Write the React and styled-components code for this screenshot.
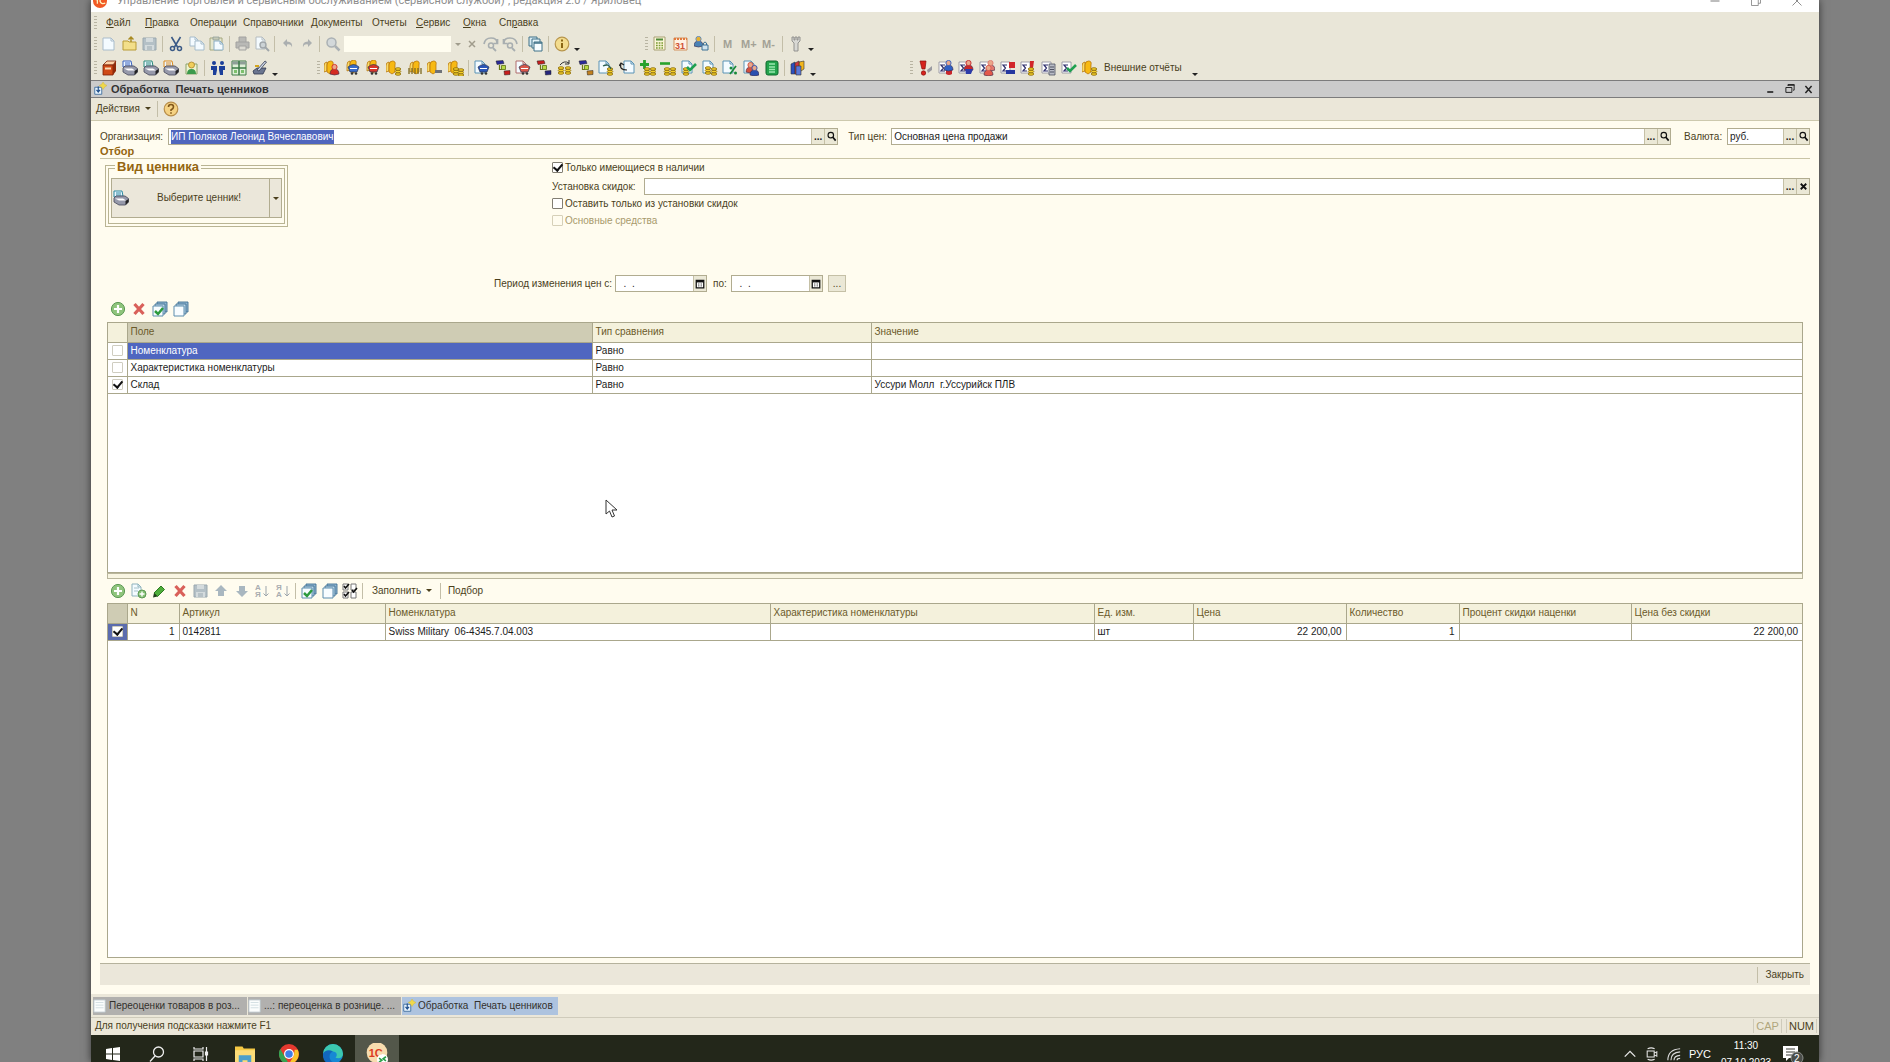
import React, { useEffect, useRef } from "react"
import styled, { createGlobalStyle, css } from "styled-components"

/* ---------- icon pieces ---------- */

const Page = ({ x = 1, y = 1, w = 10, h = 12, line = "#5b93b5" }) => (
	<g>
		<path d={`M${x} ${y}h${w - 3}l3 3v${h - 3}h-${w}z`} fill="#f4fbff" stroke={line} />
		<path d={`M${x + w - 3} ${y}v3h3`} fill="none" stroke={line} />
	</g>
)

const Coins = ({ x = 9, y = 7 }) => (
	<g fill="#f3cf2a" stroke="#8a6a08" strokeWidth="0.8">
		<ellipse cx={x + 3} cy={y + 7} rx="2.800" ry="1.300" />
		<ellipse cx={x + 3} cy={y + 4.5} rx="2.800" ry="1.300" />
		<ellipse cx={x + 3} cy={y + 2} rx="2.800" ry="1.300" />
	</g>
)

const Person = ({ x = 5, y = 4, c = "#2b56b8" }) => (
	<g>
		<path d={`M${x} ${y + 10}q0-5 4.500-5t4.500 5q-4.500 2-9 0z`} fill={c} stroke="#3a2a4a" strokeWidth="0.6" />
		<circle cx={x + 4.5} cy={y + 3} r="2.600" fill="#e9a88a" stroke={c} strokeWidth="0.9" />
	</g>
)

const Folder = ({ x = 0, y = 1 }) => (
	<g>
		<path d={`M${x} ${y + 11}v-6q0-4 3-4v9z`} fill="#fbdc6a" stroke="#b06d06" strokeWidth="0.7" />
		<path d={`M${x + 3} ${y + 11}v-7q0-4 3.500-4t2.500 4v7l-3 2z`} fill="#f7b913" stroke="#b06d06" strokeWidth="0.7" />
	</g>
)

const Cart = ({ x = 4, y = 6, c = "#2b56b8" }) => (
	<g>
		<path d={`M${x} ${y + 1}q5.500-5 11 0l-2 5h-7z`} fill={c} stroke="#26314d" strokeWidth="0.7" />
		<path d={`M${x + 2} ${y + 2.5}h7`} stroke="#fff" strokeWidth="1" />
		<circle cx={x + 4} cy={y + 7.5} r="1.300" fill="#333" />
		<circle cx={x + 8} cy={y + 7.5} r="1.300" fill="#333" />
	</g>
)

const Printer = ({ c = "#3d6fa8" }) => (
	<g>
		<path d="M1 7V1h8l1 5z" fill="#eaf5ff" stroke={c} />
		<path d="M3 3h5M3 5h5" stroke={c} />
		<path d="M1 8l2-2h9l3.500 2.500V12l-3 3H6l-5-3z" fill="#9699aa" stroke="#45485a" strokeWidth="0.8" />
		<path d="M2 8.500h8l3 2H6z" fill="#fff" />
		<path d="M12.500 11l3-2v3l-3 3z" fill="#222" />
	</g>
)

const Sigma = () => (
	<g>
		<path d="M1 2h9v11H1z" fill="#fff" stroke="#8b8b9b" strokeWidth="0.8" />
		<path d="M7 5H3l2.500 3L3 11h4" fill="none" stroke="#2d2d6b" strokeWidth="1.200" />
	</g>
)

const Check = ({ x = 6, y = 6 }) => (
	<path d={`M${x} ${y + 3}l3 3 6-6`} fill="none" stroke="#1fa050" strokeWidth="2.600" />
)

const Stairs = ({ a = "#2b2a9b", b = "#c81e1e" }) => (
	<g>
		<path d="M1 1l7-.500 1 3-7 1z" fill={a} stroke="#222" strokeWidth="0.5" />
		<path d="M4.500 5v4.500H7" fill="none" stroke="#6b7a14" strokeWidth="1.200" />
		<path d="M6.500 5.500h4v4h-4z" fill="#b7d943" stroke="#5b7012" strokeWidth="0.8" />
		<path d="M9 11l6-.500v4L9.500 15z" fill={b} stroke="#222" strokeWidth="0.5" />
	</g>
)

const Magnifier = ({ c = "#9b9b9b", fill = "#d3d8da" }) => (
	<g>
		<circle cx="6.500" cy="6.500" r="4.500" fill={fill} stroke={c} strokeWidth="1.500" />
		<path d="M10 10l4.500 4.500" stroke={c} strokeWidth="2.500" />
	</g>
)

const Stack = ({ checked }) => (
	<g>
		<path d="M5 1h10v10H5z" fill="#8fb4cf" stroke="#3f6f93" strokeWidth="0.9" />
		<path d="M3 3h10v10H3z" fill="#b9d4e6" stroke="#3f6f93" strokeWidth="0.9" />
		<path d="M1 5h10v10H1z" fill="#f7fcff" stroke="#5d8dad" />
		{checked && <path d="M3 10l3 3 5-6" fill="none" stroke="#2c9a3c" strokeWidth="2.500" />}
	</g>
)

const Letter = ({ children, x = 1, y = 12, size = 11, c = "#a3a196" }) => (
	<text x={x} y={y} fontFamily="Liberation Sans, sans-serif" fontWeight="bold" fontSize={size} fill={c}>
		{children}
	</text>
)

const SortIcon = ({ top, bottom }) => (
	<g>
		<Letter x={1} y={7} size={8} c="#a9adb0">{top}</Letter>
		<Letter x={1} y={14} size={8} c="#a9adb0">{bottom}</Letter>
		<path d="M12 3v10M9.500 10.500L12 13l2.500-2.500" fill="none" stroke="#9ca5ab" />
	</g>
)

const icons = {
	newDoc: <Page x={2} y={2} w={11} h={12} line="#a9bccb" />,
	open: (
		<g>
			<path d="M1 14V5h5l1 1h7v8z" fill="#f3df8a" stroke="#b99b37" />
			<path d="M9 6V1M6.500 3.500L9 1l2.500 2.500" fill="none" stroke="#a88a20" strokeWidth="1.400" />
		</g>
	),
	save: (
		<g>
			<path d="M1 2h13v12H1z" fill="#b4c0c6" stroke="#9aa8af" />
			<path d="M4 2h7v4H4zM3 9h9v5H3z" fill="#d4dbdd" />
			<path d="M5 11h5M5 13h5" stroke="#9aa8af" />
		</g>
	),
	cut: (
		<g fill="none" stroke="#3b5a86">
			<path d="M3.500 1l6 10M12.500 1l-6 10" strokeWidth="1.600" />
			<circle cx="4.500" cy="12.500" r="2" strokeWidth="1.500" />
			<circle cx="11.500" cy="12.500" r="2" strokeWidth="1.500" />
		</g>
	),
	copy: (
		<g>
			<Page x={1} y={1} w={8} h={9} line="#a6bccb" />
			<Page x={6} y={5} w={9} h={9} line="#a6bccb" />
		</g>
	),
	paste: (
		<g>
			<path d="M1 2h12v12H1z" fill="#e5e6cf" stroke="#a4a77f" />
			<path d="M4 1h6v3H4z" fill="#c5c9b6" stroke="#8a9a9a" strokeWidth="0.7" />
			<Page x={5} y={5} w={9} h={9} line="#8caec4" />
		</g>
	),
	printGray: (
		<g fill="#b9b9b6" stroke="#a2a2a0">
			<path d="M4 6V1h7v5" />
			<path d="M1 6h13v6H1z" />
			<path d="M4 10h7v4H4z" fill="#dcdad2" />
		</g>
	),
	preview: (
		<g>
			<Page x={2} y={1} w={9} h={12} line="#b4bcc0" />
			<circle cx="9" cy="9" r="3" fill="#ccd3d6" stroke="#a0a6aa" strokeWidth="1.400" />
			<path d="M11 11l4 4" stroke="#a0a6aa" strokeWidth="2" />
		</g>
	),
	undo: <path d="M7 3L3 7l4 4V8.500q4-1 5 3 1-6-5-6z" fill="#abafb0" />,
	redo: <path d="M9 3l4 4-4 4V8.500q-4-1-5 3-1-6 5-6z" fill="#abafb0" />,
	find: <Magnifier c="#aab0b4" />,
	findNext: (
		<g fill="none" stroke="#a8aeb0">
			<path d="M1 8q1-6 7-6t6 5M14.500 3v4.500h-4" strokeWidth="1.700" />
			<circle cx="8" cy="9.500" r="2.500" strokeWidth="1.500" />
			<path d="M10 12l3 3" strokeWidth="1.800" />
		</g>
	),
	findPrev: (
		<g fill="none" stroke="#a8aeb0">
			<path d="M15 8q-1-6-7-6T2 7M1.500 3v4.500h4" strokeWidth="1.700" />
			<circle cx="8" cy="9.500" r="2.500" strokeWidth="1.500" />
			<path d="M10 12l3 3" strokeWidth="1.800" />
		</g>
	),
	windows: (
		<g stroke="#3f7187">
			<path d="M1 1h8v9H1z" fill="#d8ebf3" />
			<path d="M4 3h8v9H4z" fill="#e5f3f8" />
			<path d="M6 6h8v9H6z" fill="#f8fdff" />
			<path d="M6 7h8" strokeWidth="1.500" />
		</g>
	),
	info: (
		<g>
			<circle cx="8" cy="8" r="6.800" fill="#f3dc8e" stroke="#b8964c" strokeWidth="1.200" />
			<path d="M8 7v5M8 3.500v2" stroke="#8a6514" strokeWidth="2" />
		</g>
	),
	help: (
		<g>
			<circle cx="8" cy="8" r="6.800" fill="#f5d283" stroke="#b88e4a" strokeWidth="1.200" />
			<path d="M5.500 6q0-2.500 2.500-2.500T10.500 6q0 1.500-2.500 3v1M8 11.200v1.500" fill="none" stroke="#80571b" strokeWidth="1.600" />
		</g>
	),
	calc: (
		<g>
			<path d="M2 1h11v13H2z" fill="#fbf6d8" stroke="#a8a074" />
			<path d="M4 3.500h7" stroke="#4f8a37" strokeWidth="2" />
			<path d="M4 7h7M4 9.500h7M4 12h7" stroke="#7b9a32" strokeWidth="1.500" strokeDasharray="1.700 1" />
		</g>
	),
	calendar: (
		<g>
			<path d="M1 2h13v12H1z" fill="#fff1e4" stroke="#d3915e" />
			<path d="M1 3h13" stroke="#e17a3c" strokeWidth="2" strokeDasharray="2 1" />
			<Letter x={2} y={13} size={9} c="#cf5234">31</Letter>
		</g>
	),
	userLock: (
		<g>
			<Person x={0} y={0} c="#4a82b5" />
			<path d="M8 9h6v5H8z" fill="#cfe3ee" stroke="#3c7195" />
			<path d="M9.500 9V7q1.500-2 3 0v2" fill="none" stroke="#3c7195" />
			<circle cx="4.500" cy="3" r="2" fill="#e5b32c" />
		</g>
	),
	m: <Letter x={3}>M</Letter>,
	mPlus: <Letter x={0}>M+</Letter>,
	mMinus: <Letter x={0}>M-</Letter>,
	wrench: <path d="M4 1v4l2 2v8h4V7l2-2V1h-2v3H9V1H7v3H6V1z" fill="#d8d8d4" stroke="#8a8a88" strokeWidth="0.9" />,
	book: (
		<g>
			<path d="M2 5l4-4h9l-3 4z" fill="#ffd2a8" stroke="#7a1f08" strokeWidth="0.8" />
			<path d="M2 5h10v10H2z" fill="#cf4a17" stroke="#7a1f08" strokeWidth="0.8" />
			<path d="M12 5l3-4v10l-3 4z" fill="#8f2a0a" />
			<path d="M4 7.500h6v2H4z" fill="#fbd9b5" />
		</g>
	),
	printBlue: <Printer c="#3b62c0" />,
	printGreen: <Printer c="#2a8a7a" />,
	printOrange: <Printer c="#db8a1c" />,
	printTeal: <Printer c="#2b8aa0" />,
	picture: (
		<g>
			<path d="M2 4h11v10H2z" fill="#eef3d0" stroke="#8ba36a" />
			<path d="M3 14q0-5 4.500-5t4.500 5z" fill="#3b9a4b" />
			<circle cx="7.500" cy="5" r="3" fill="#f1cf5b" stroke="#a8832a" strokeWidth="0.8" />
		</g>
	),
	people: (
		<g fill="#1c3f9a">
			<circle cx="4" cy="3" r="2" />
			<circle cx="12" cy="3" r="2" />
			<path d="M1 6h6v4l-1 5H3V10H1zM9 6h6v4h-2v5h-3l-1-5z" />
		</g>
	),
	grid: (
		<g>
			<path d="M1 1h14v14H1z" fill="#dff0d7" stroke="#3c7b45" />
			<path d="M1 3h14" stroke="#8f9f97" strokeWidth="3" />
			<path d="M8 1v14M1 8h14" stroke="#3c7b45" strokeWidth="1.500" />
			<path d="M3 10h3v3H3zM10 10h3v3h-3z" fill="#7cc06c" />
		</g>
	),
	sign: (
		<g>
			<path d="M1 11l4-3h9l-3 6H2z" fill="#6b7690" stroke="#30384e" strokeWidth="0.8" />
			<path d="M5 10l8-9 1.500 1L7 11z" fill="#cfd8ea" stroke="#30384e" strokeWidth="0.8" />
			<path d="M3 6h4" stroke="#d3a51c" strokeWidth="2" />
		</g>
	),
	bagRed: <g><Folder /><Person x={6} y={4} c="#d42b22" /></g>,
	bagBlue: <g><Folder x={2} y={0} /><Cart x={3} y={6} c="#3a6cc8" /></g>,
	bagCart: <g><Folder x={2} y={0} /><Cart x={3} y={6} c="#d8362a" /></g>,
	bagCoins: <g><Folder /><Coins /></g>,
	bagBars: <g><Folder x={3} /><path d="M2 8v6M5 8v6M8 8v6M11 8v6M14 8v6" stroke="#7d6a20" strokeWidth="1.300" /></g>,
	bagKey: <g><Folder /><path d="M8 10h7v3H8z" fill="#6f7278" /></g>,
	bagCoin: <g><Folder /><Coins x={5} y={7} /><Coins x={10} y={8} /></g>,
	docCart: <g><Page /><Cart /></g>,
	stairsRed: <Stairs />,
	docCartRed: <g><Page line="#b06d6d" /><Cart c="#d8564a" /></g>,
	stairsBlue: <Stairs a="#c81e1e" b="#26267d" />,
	coinsTurn: <g><Coins x={1} y={6} /><Coins x={8} y={6} /><path d="M3 5q4-5 9-2M12 0v4H8" fill="none" stroke="#333" /></g>,
	stairsOrange: <Stairs b="#c2801d" />,
	docArrow: <g><Page /><Coins /><path d="M5 6q6-3 8 3" fill="none" stroke="#2a5d50" strokeWidth="1.300" /></g>,
	docBack: <g><Page x={5} /><path d="M8 10Q0 10 2 4M0 6l2-3 3 2" fill="none" stroke="#222" strokeWidth="1.200" /></g>,
	plusCoins: <g><path d="M4.500 0v9M0 4.500h9" stroke="#28a22b" strokeWidth="2.800" /><Coins x={4} /><Coins x={10} /></g>,
	minusCoins: <g><path d="M0 3.500h10" stroke="#28a22b" strokeWidth="2.600" /><Coins x={4} /><Coins x={10} /></g>,
	docCheck: <g><Page /><Coins x={2} y={7} /><Check x={6} y={4} /></g>,
	docCoins: <g><Page /><Coins x={3} y={6} /><Coins x={9} /></g>,
	docPercent: <g><Page /><path d="M14 6l-6 8" stroke="#188a3a" strokeWidth="1.700" /><circle cx="9" cy="8" r="1.500" fill="#188a3a" /><circle cx="13.500" cy="13" r="1.500" fill="#188a3a" /></g>,
	docPeople: <g><Page /><Person x={3} y={2} c="#d4503f" /><Person x={7} y={5} c="#2a4fae" /></g>,
	greenCalc: (
		<g>
			<rect x="2" y="1" width="12" height="14" rx="2" fill="#23a34c" stroke="#0e6b2d" />
			<path d="M5 4h6M5 7h6M5 9.500h6M5 12h6" stroke="#9be7ae" strokeWidth="1.300" />
		</g>
	),
	books: (
		<g strokeWidth="0.6" stroke="#333">
			<path d="M9 2l5-1v8l-3 2H9z" fill="#f2b61c" />
			<path d="M1 4l4-2v12H1z" fill="#2b4fc0" />
			<path d="M5 3l4-2v13H5z" fill="#d2353c" />
			<path d="M6 6h5v9H6z" fill="#5b78d8" />
		</g>
	),
	alert: (
		<g>
			<path d="M3 1h6l-1 8H5z" fill="#d6231d" stroke="#8a0d0a" strokeWidth="0.7" />
			<circle cx="6.500" cy="13" r="2.200" fill="#d6231d" stroke="#8a0d0a" strokeWidth="0.7" />
			<path d="M10 10l5-4v4l-4 3z" fill="#9a9aa0" />
		</g>
	),
	sumBlue: <g><Sigma /><path d="M8 8h6v6q-3 2-6 0z" fill="#c8262b" /><Person x={6} y={0} c="#2f5fc4" /></g>,
	sumRed: <g><Sigma /><Person x={6} y={0} c="#c8262b" /><path d="M7 9h8l-2 5H8z" fill="#2c3ba8" /></g>,
	sumPeople: <g><Sigma /><Person x={7} y={0} c="#e07a70" /><Person x={5} y={5} c="#e2584b" /></g>,
	sumFlag: <g><Sigma /><path d="M9 2h6v6H9z" fill="#d2262a" /><path d="M6 10h9v4H6z" fill="#26379f" /></g>,
	sumTick: <g><Sigma /><path d="M10 1h4l-1 7h-3z" fill="#d2262a" /><Coins x={8} y={7} /></g>,
	sumList: <g><Sigma /><path d="M8 4h6v11H8z" fill="#b9bcc6" stroke="#4c5060" strokeWidth="0.8" /><path d="M9 7h4M9 9.500h4M9 12h4" stroke="#4c5060" /></g>,
	sumCheck: <g><Sigma /><Check x={6} y={5} /></g>,
	form: (
		<g>
			<path d="M2 6h8v8H2z" fill="#eaf6ff" stroke="#3b6c9b" />
			<path d="M6 5v6M4 9l2 2.500L8 9" fill="none" stroke="#1d4d8a" strokeWidth="1.300" />
			<path d="M11.500 0l1.800 2.700L16 4l-2.700 1.800L11.500 8.500 9.700 5.800 7 4l2.700-1.300z" fill="#efd84a" stroke="#cdb440" strokeWidth="0.5" />
		</g>
	),
	add: (
		<g>
			<circle cx="8" cy="8" r="6.600" fill="#8fc47c" stroke="#5d9a55" />
			<path d="M8 4v8M4 8h8" stroke="#fff" strokeWidth="2.200" />
		</g>
	),
	addCopy: (
		<g>
			<Page x={1} y={1} w={9} h={12} line="#8fb3bd" />
			<path d="M3 5h5M3 8h4" stroke="#a7c3ca" />
			<circle cx="11" cy="11" r="4" fill="#86c075" stroke="#5d9a55" />
			<path d="M11 8.500v5M8.500 11h5" stroke="#fff" strokeWidth="1.400" />
		</g>
	),
	edit: (
		<g>
			<path d="M3 10l7-7 3.500 3.500-7 7z" fill="#4fae3b" stroke="#2c7a22" />
			<path d="M3 10l3.500 3.500L2 14.500z" fill="#23401d" />
		</g>
	),
	remove: <path d="M3.500 3l9 10M12.500 3l-9 10" stroke="#d9605a" strokeWidth="3.200" />,
	up: <path d="M8 2l6 6h-3v5H5V8H2z" fill="#a9b7c0" />,
	down: <path d="M8 14L2 8h3V3h6v5h3z" fill="#a9b7c0" />,
	sortAsc: <SortIcon top="А" bottom="Я" />,
	sortDesc: <SortIcon top="Я" bottom="А" />,
	checkAll: <Stack checked />,
	uncheckAll: <Stack />,
	invert: (
		<g>
			<path d="M1 1h5v6H1zM1 9h5v6H1zM9 1h5v6H9zM9 9h5v6H9z" fill="#fff" stroke="#777" />
			<path d="M2 3l1.500 2L7 1M2 11l1.500 2L7 9M10 7l1.500 2L15 5" fill="none" stroke="#111" strokeWidth="1.600" />
		</g>
	),
	sheet: (
		<g>
			<path d="M1 1h13v14H1z" fill="#fbfdfd" stroke="#b7c2c8" />
			<path d="M3 4h9M3 7h9M3 10h9" stroke="#cfdbe0" />
		</g>
	),
	lens: <g fill="none" stroke="#111"><circle cx="7" cy="6" r="4" strokeWidth="1.700" /><path d="M10 9l4 5" strokeWidth="2.400" /></g>,
	date: <g><path d="M2 2h12v12H2z" fill="#fff" stroke="#111" strokeWidth="2" /><path d="M2 4h12" stroke="#111" strokeWidth="3" /><path d="M5 8h6M5 11h6" stroke="#444" strokeWidth="1.600" strokeDasharray="2 2" /></g>,
	cross: <path d="M4 4l8 8M12 4l-8 8" stroke="#111" strokeWidth="2.600" />,
	crossGray: <path d="M5 5l6 6M11 5l-6 6" stroke="#a09c8c" strokeWidth="1.500" />,
	minimize: <path d="M3 12h8" stroke="#222" strokeWidth="2.200" />,
	restore: <g fill="none" stroke="#222"><path d="M5.500 4V2.500h8v7H12" strokeWidth="1.300" /><path d="M5 2.500h9" strokeWidth="2" /><path d="M2.500 6h8v6.500h-8z" strokeWidth="1.300" /></g>,
	close: <path d="M3.500 3l9 10M12.500 3l-9 10" stroke="#222" strokeWidth="2.200" />,
	start: <path d="M1 3l6-1v5.500H1zM8 2l7-1v6.500H8zM1 8.500h6V14l-6-1zM8 8.500h7V15l-7-1z" fill="#fff" />,
	search: <g fill="none" stroke="#eee" strokeWidth="1.300"><circle cx="9.500" cy="6" r="5" /><path d="M6 10l-5 5.500" /></g>,
	taskView: <g fill="none" stroke="#eee" strokeWidth="1.200"><path d="M1 1v2h9V1M1 5h9v6H1zM1 15v-2h9v2M13.500 1v14" /><path d="M12.500 6h2v3h-2z" fill="#eee" /></g>,
	explorer: (
		<g>
			<path d="M0 2h6l1 1.500h9V15H0z" fill="#f6c945" />
			<path d="M0 5h16v10H0z" fill="#fbdc78" />
			<path d="M3 15V9h10v6h-3v-2H6v2z" fill="#4b9fcb" />
		</g>
	),
	chrome: (
		<g>
			<circle cx="8" cy="8" r="8" fill="#e5392f" />
			<path d="M1 4l3.500 6 3.500 6A8 8 0 0 1 1 4z" fill="#35a352" />
			<path d="M8 16l4-7 .500-4.500H15A8 8 0 0 1 8 16z" fill="#f9c52c" />
			<circle cx="8" cy="8" r="4" fill="#fff" />
			<circle cx="8" cy="8" r="3" fill="#3f7fe8" />
		</g>
	),
	edge: (
		<g>
			<circle cx="8" cy="8" r="8" fill="#1688d4" />
			<path d="M0 8a8 8 0 0 1 16 0c0 3-3 4-6 3 2-2 1-5-2-5-4 0-7 0-8 2z" fill="#3cc8b0" />
			<path d="M0 8c1-3 5-4 8-2-3 1-4 5-1 8 2 1.500 5 1 7 0A8 8 0 0 1 0 8z" fill="#1267bd" />
		</g>
	),
	oneC: (
		<g>
			<circle cx="8" cy="7" r="7.500" fill="#f7dcae" />
			<Letter x={2} y={10} size={8} c="#dc3b1f">1С</Letter>
			<circle cx="12" cy="12" r="4" fill="#fff" />
			<path d="M9.500 11l2 1.500-2 1.500M14.500 10l-2 1.500 2 1.500" fill="none" stroke="#2ba04a" strokeWidth="1.200" />
		</g>
	),
	appLogo: (
		<g>
			<circle cx="8" cy="8" r="8" fill="#f15a24" />
			<path d="M3 7l2-2v6M13 6q-4-3-5 2 1 4 6 2.500" fill="none" stroke="#fff2c0" strokeWidth="1.500" />
		</g>
	),
	chevron: <path d="M2 11l6-6 6 6" fill="none" stroke="#e8e8e8" strokeWidth="1.500" />,
	camera: <g fill="none" stroke="#e8e8e8" strokeWidth="1.200"><path d="M3 2q4-2 8 0M3 14q4 2 8 0M2.500 4.500h8v7h-8zM10.500 7l3-1.500v5l-3-1.500" /></g>,
	wifi: <g fill="none" stroke="#d8d8d8" strokeWidth="1.300"><path d="M1 15Q1 3 15 2M4.500 15q0-9 10.500-9.500M8 15q0-5 7-5.500M11.500 15q0-2 3.500-2" /></g>,
	capMin: <path d="M2 8h12" stroke="#777" strokeWidth="1.300" />,
	capRestore: <path d="M2 5h9v9H2zM5 5V2h9v9h-3" fill="none" stroke="#777" />,
	capClose: <path d="M2 2l12 12M14 2L2 14" stroke="#777" strokeWidth="1.100" />,
}

const Icon = ({ name, size = 16 }) => (
	<svg width={size} height={size} viewBox="0 0 16 16" aria-hidden="true">
		{icons[name]}
	</svg>
)

/* ---------- data ---------- */

const menu = [
	["Ф", "айл", "", 39],
	["П", "равка", "", 45],
	["", "", "Операции", 53],
	["", "", "Справочники", 68],
	["", "", "Документы", 61],
	["", "", "Отчеты", 44],
	["С", "ервис", "", 47],
	["О", "кна", "", 36],
	["р", "авка", "Сп", 50],
]

const catalogIcons = ["bagRed", "bagBlue", "bagCart", "bagCoins", "bagBars", "bagKey", "bagCoin"]
const documentIcons = [
	"docCart", "stairsRed", "docCartRed", "stairsBlue", "coinsTurn", "stairsOrange", "docArrow", "docBack",
	"plusCoins", "minusCoins", "docCheck", "docCoins", "docPercent", "docPeople", "greenCalc",
]
const reportIcons = ["alert", "sumBlue", "sumRed", "sumPeople", "sumFlag", "sumTick", "sumList", "sumCheck", "bagCoins"]

const filters = [
	{ field: "Номенклатура", compare: "Равно", value: "", on: false, selected: true },
	{ field: "Характеристика номенклатуры", compare: "Равно", value: "", on: false },
	{ field: "Склад", compare: "Равно", value: "Уссури Молл  г.Уссурийск ПЛВ", on: true },
]

const goodsColumns = [
	["N", 52],
	["Артикул", 206],
	["Номенклатура", 385],
	["Характеристика номенклатуры", 324],
	["Ед. изм.", 99],
	["Цена", 153],
	["Количество", 113],
	["Процент скидки наценки", 172],
	["Цена без скидки", null],
]

/* ---------- page ---------- */

const Tools = ({ names, width }) => (
	<ToolGroup $width={width}>
		{names.map((name) => (
			<ToolButton key={name} type="button" aria-label={name}>
				<Icon name={name} />
			</ToolButton>
		))}
	</ToolGroup>
)

const PickField = ({ id, value, inputRef, last = "lens", grow, width }) => (
	<Field $grow={grow} $width={width}>
		<FieldInput id={id} ref={inputRef} defaultValue={value} />
		<FieldButton type="button" aria-label="Выбрать">...</FieldButton>
		<FieldButton type="button" aria-label="Открыть"><Icon name={last} size={11} /></FieldButton>
	</Field>
)

const DateField = ({ id }) => (
	<Field $width={92}>
		<FieldInput id={id} defaultValue="  .  ." />
		<FieldButton type="button" aria-label="Календарь"><Icon name="date" size={10} /></FieldButton>
	</Field>
)

const App = () => {
	const organization = useRef(null)

	useEffect(() => {
		organization.current.focus()
		organization.current.select()
	}, [])

	return (
		<>
			<GlobalStyle />
			<Desktop>
				<Window>
					<Caption>
						<CaptionInner>
							<Icon name="appLogo" size={14} />
							<CaptionText>
								Управление торговлей и сервисным обслуживанием (сервисной службой)", редакция 2.0 / Яриловец
							</CaptionText>
							<CaptionButton type="button" aria-label="Свернуть"><Icon name="capMin" size={12} /></CaptionButton>
							<CaptionButton type="button" aria-label="Развернуть"><Icon name="capRestore" size={12} /></CaptionButton>
							<CaptionButton type="button" aria-label="Закрыть окно"><Icon name="capClose" size={12} /></CaptionButton>
						</CaptionInner>
					</Caption>

					<Bars>
						<Bar $height={21}>
							<Grip />
							<Menu>
								{menu.map(([key, rest, before, width]) => (
									<MenuItem key={before + key + rest} type="button" $width={width}>
										{before}<u>{key}</u>{rest}
									</MenuItem>
								))}
							</Menu>
						</Bar>
						<Bar $height={22}>
							<Grip />
							<Tools names={["newDoc", "open", "save"]} width={57} />
							<Separator />
							<Tools names={["cut", "copy", "paste"]} width={57} />
							<Separator />
							<Tools names={["printGray", "preview"]} width={35} />
							<Separator />
							<Tools names={["undo", "redo"]} width={35} />
							<Separator />
							<Tools names={["find"]} width={16} />
							<SearchInput aria-label="Поиск" />
							<Arrow $gray />
							<Tools names={["crossGray", "findNext", "findPrev"]} width={54} />
							<Separator />
							<Tools names={["windows"]} width={16} />
							<Separator />
							<Tools names={["info"]} width={16} />
							<Arrow $low />
							<Gap $width={61} />
							<Grip />
							<Tools names={["calc", "calendar", "userLock"]} width={58} />
							<Separator />
							<Tools names={["m", "mPlus", "mMinus"]} width={58} />
							<Separator />
							<Tools names={["wrench"]} width={16} />
							<Arrow $low />
						</Bar>
						<Bar $height={25}>
							<Grip />
							<Tools names={["book", "printBlue", "printGreen", "printOrange", "picture"]} width={99} />
							<Separator />
							<Tools names={["people", "grid", "sign"]} width={58} />
							<Arrow $low />
							<Gap $width={35} />
							<Grip />
							<Tools names={catalogIcons} width={140} />
							<Separator />
							<Tools names={documentIcons} width={306} />
							<Separator />
							<Tools names={["books"]} width={16} />
							<Arrow $low />
							<Gap $width={90} />
							<Grip />
							<Tools names={reportIcons} width={181} />
							<TextButton type="button" $pad={6}>Внешние отчёты</TextButton>
							<Arrow $low />
						</Bar>
					</Bars>

					<FormTitle>
						<Icon name="form" size={14} />
						<h1>Обработка&nbsp; Печать ценников</h1>
						<TitleButton type="button" aria-label="Свернуть форму"><Icon name="minimize" size={12} /></TitleButton>
						<TitleButton type="button" aria-label="Восстановить форму"><Icon name="restore" size={12} /></TitleButton>
						<TitleButton type="button" aria-label="Закрыть форму"><Icon name="close" size={11} /></TitleButton>
					</FormTitle>
					<Actions>
						<TextButton type="button">Действия <Caret /></TextButton>
						<Separator />
						<ToolButton type="button" aria-label="Справка"><Icon name="help" /></ToolButton>
					</Actions>

					<Form>
						<HeadRow>
							<Label htmlFor="organization" $width={68}>Организация:</Label>
							<PickField id="organization" inputRef={organization} value="ИП Поляков Леонид Вячеславович" grow={670} />
							<Label htmlFor="priceType" $width={53} $pad={10}>Тип цен:</Label>
							<PickField id="priceType" value="Основная цена продажи" grow={780} />
							<Label htmlFor="currency" $width={56} $pad={13}>Валюта:</Label>
							<PickField id="currency" value="руб." width={83} />
						</HeadRow>
						<SectionTitle>Отбор</SectionTitle>

						<Options>
							<TagGroup>
								<legend>Вид ценника</legend>
								<TagButtons>
									<TagButton type="button">
										<Icon name="printTeal" />
										<span>Выберите ценник!</span>
									</TagButton>
									<TagArrow type="button" aria-label="Варианты ценника"><Caret /></TagArrow>
								</TagButtons>
							</TagGroup>
							<OptionColumn>
								<CheckLabel>
									<Checkbox type="checkbox" defaultChecked />
									Только имеющиеся в наличии
								</CheckLabel>
								<DiscountRow>
									<Label htmlFor="discount" $width={92}>Установка скидок:</Label>
									<PickField id="discount" value="" last="cross" grow={1} />
								</DiscountRow>
								<CheckLabel>
									<Checkbox type="checkbox" />
									Оставить только из установки скидок
								</CheckLabel>
								<CheckLabel $off>
									<Checkbox type="checkbox" disabled />
									Основные средства
								</CheckLabel>
							</OptionColumn>
						</Options>

						<PeriodRow>
							<Label htmlFor="from" $width={121}>Период изменения цен с:</Label>
							<DateField id="from" />
							<Label htmlFor="to" $width={24} $pad={6}>по:</Label>
							<DateField id="to" />
							<PeriodButton type="button">...</PeriodButton>
						</PeriodRow>

						<TableBar>
							<Tools names={["add", "remove", "checkAll", "uncheckAll"]} width={79} />
						</TableBar>
						<FilterBox>
							<Table>
								<colgroup>
									<col width="19" />
									<col width="465" />
									<col width="279" />
									<col />
								</colgroup>
								<thead>
									<tr>
										<Th />
										<Th $current>Поле</Th>
										<Th>Тип сравнения</Th>
										<Th>Значение</Th>
									</tr>
								</thead>
								<tbody>
									{filters.map((row) => (
										<tr key={row.field}>
											<Td $check><Checkbox type="checkbox" $light defaultChecked={row.on} aria-label={row.field} /></Td>
											<Td $selected={row.selected}>{row.field}</Td>
											<Td>{row.compare}</Td>
											<Td>{row.value}</Td>
										</tr>
									))}
								</tbody>
							</Table>
						</FilterBox>
						<Splitter />

						<TableBar $tall>
							<Tools
								names={["add", "addCopy", "edit", "remove", "save", "up", "down", "sortAsc", "sortDesc"]}
								width={181}
							/>
							<Separator />
							<Tools names={["checkAll", "uncheckAll", "invert"]} width={57} />
							<Separator />
							<TextButton type="button" $pad={4}>Заполнить <Caret /></TextButton>
							<Separator />
							<TextButton type="button">Подбор</TextButton>
						</TableBar>
						<GoodsBox>
							<Table>
								<colgroup>
									<col width="19" />
									{goodsColumns.map(([title, width]) => (
										<col key={title} width={width || undefined} />
									))}
								</colgroup>
								<thead>
									<tr>
										<Th $current />
										{goodsColumns.map(([title]) => (
											<Th key={title}>{title}</Th>
										))}
									</tr>
								</thead>
								<tbody>
									<tr>
										<Td $check $framed><Checkbox type="checkbox" $light defaultChecked aria-label="Строка 1" /></Td>
										<Td $right>1</Td>
										<Td>0142811</Td>
										<Td>Swiss Military  06-4345.7.04.003</Td>
										<Td />
										<Td>шт</Td>
										<Td $right>22 200,00</Td>
										<Td $right>1</Td>
										<Td />
										<Td $right>22 200,00</Td>
									</tr>
								</tbody>
							</Table>
						</GoodsBox>
						<FormFooter>
							<Separator />
							<TextButton type="button">Закрыть</TextButton>
						</FormFooter>
					</Form>

					<WindowTabs>
						<WindowTab type="button" $width={154}><Icon name="sheet" size={14} />Переоценки товаров в роз...</WindowTab>
						<WindowTab type="button" $width={153}><Icon name="sheet" size={14} />...: переоценка в рознице. ...</WindowTab>
						<WindowTab type="button" $width={156} $active><Icon name="form" size={14} />Обработка&nbsp; Печать ценников</WindowTab>
					</WindowTabs>
					<StatusBar>
						<span>Для получения подсказки нажмите F1</span>
						<Indicator $off>CAP</Indicator>
						<Indicator>NUM</Indicator>
					</StatusBar>
					<Taskbar>
						<TaskbarInner>
							<TaskButton type="button" aria-label="Пуск"><Icon name="start" /></TaskButton>
							<TaskButton type="button" aria-label="Поиск в системе"><Icon name="search" /></TaskButton>
							<TaskButton type="button" aria-label="Представление задач"><Icon name="taskView" /></TaskButton>
							<TaskButton type="button" aria-label="Проводник"><Icon name="explorer" size={20} /></TaskButton>
							<TaskButton type="button" aria-label="Chrome"><Icon name="chrome" size={20} /></TaskButton>
							<TaskButton type="button" aria-label="Edge"><Icon name="edge" size={20} /></TaskButton>
							<TaskButton type="button" aria-label="1С" $active><Icon name="oneC" size={22} /></TaskButton>
							<Tray>
								<Icon name="chevron" size={14} />
								<Icon name="camera" size={14} />
								<Icon name="wifi" size={14} />
								<span>РУС</span>
								<Clock>
									<span>11:30</span>
									<span>07.10.2023</span>
								</Clock>
								<Notifications type="button" aria-label="Уведомления">
									<svg width="24" height="24" viewBox="0 0 24 24" aria-hidden="true">
										<path d="M2 4h15v12H8l-3 3v-3H2z" fill="#fff" />
										<path d="M5 7h9M5 10h9M5 13h6" stroke="#3a3d35" />
										<circle cx="16" cy="16" r="6" fill="#4b4e4a" stroke="#8b8e8a" />
										<text x="13" y="20" fontFamily="Liberation Sans, sans-serif" fontSize="10" fill="#fff">2</text>
									</svg>
								</Notifications>
							</Tray>
						</TaskbarInner>
					</Taskbar>
				</Window>
				<Cursor width="13" height="20" viewBox="0 0 13 20" aria-hidden="true">
					<path d="M1 1v14l3.500-3 2.500 6 2.500-1-2.500-6h5z" fill="#fff" stroke="#333" />
				</Cursor>
			</Desktop>
		</>
	)
}

const GlobalStyle = createGlobalStyle`
	* {
		box-sizing: border-box;
	}

	body {
		margin: 0;
		background: #808080;
		color: #4a3f1c;
		font: 10px/14px "Liberation Sans", Arial, sans-serif;
	}

	button,
	input {
		margin: 0;
		padding: 0;
		border: 0;
		border-radius: 0;
		outline: 0;
		background: none;
		color: inherit;
		font: inherit;
	}

	svg {
		display: block;
		flex: none;
	}

	::selection {
		background: #4f66be;
		color: #fff;
	}
`

const Desktop = styled.div`
	position: relative;
	height: 100vh;
	padding: 0 71px 0 91px;
	overflow: hidden;
`

const Window = styled.div`
	height: 100%;
	display: flex;
	flex-direction: column;
	background: #ebe7d9;
	box-shadow: 0 0 8px rgba(0, 0, 0, 0.6);
`

const Caption = styled.header`
	height: 12px;
	display: flex;
	align-items: flex-end;
	overflow: hidden;
	background: #fff;
`

const CaptionInner = styled.div`
	flex: 1;
	height: 22px;
	display: flex;
	align-items: center;
	padding: 0 16px 0 2px;
	color: #8d8d8d;
	font: 11px/22px Roboto, "Noto Sans", sans-serif;
`

const CaptionText = styled.span`
	flex: 1;
	padding-left: 10px;
`

const CaptionButton = styled.button`
	margin-left: 29px;
`

const Bars = styled.div`
	background: #e9e6d8;
`

const Bar = styled.div`
	height: ${({ $height }) => $height}px;
	display: flex;
	align-items: center;
	padding-left: 3px;
`

const Grip = styled.i`
	width: 3px;
	height: 14px;
	margin-right: 4px;
	background: repeating-linear-gradient(#b8b4a2 0 1px, transparent 1px 3px);
`

const Gap = styled.span`
	width: ${({ $width }) => $width}px;
`

const Menu = styled.nav`
	display: flex;
	padding-left: 5px;
`

const MenuItem = styled.button`
	width: ${({ $width }) => $width}px;
	text-align: left;
	white-space: nowrap;
`

const ToolGroup = styled.div`
	width: ${({ $width }) => $width}px;
	display: flex;
	flex: none;
	justify-content: space-between;
`

const ToolButton = styled.button`
	width: 16px;
	height: 16px;
	flex: none;
`

const Separator = styled.i`
	width: 1px;
	height: 16px;
	flex: none;
	margin: 0 5px 0 4px;
	background: #c3bea8;
`

const SearchInput = styled.input`
	width: 107px;
	height: 16px;
	margin-left: 3px;
	background: #fffdf0;
`

const Caret = styled.i`
	display: inline-block;
	margin: 0 0 2px 2px;
	border: 3px solid transparent;
	border-top-color: #4a3f1c;
	border-bottom: 0;
`

const Arrow = styled.i`
	flex: none;
	margin: 0 3px 0 4px;
	border: 3px solid transparent;
	border-top-color: #a09c8c;
	border-bottom: 0;
	${({ $low }) =>
		$low &&
		css`
			align-self: flex-end;
			margin: 0 4px 4px;
			border-top-color: #222;
		`}
`

const TextButton = styled.button`
	padding: 0 ${({ $pad = 2 }) => $pad}px;
	white-space: nowrap;
`

const FormTitle = styled.div`
	height: 18px;
	display: flex;
	align-items: center;
	padding: 0 5px 0 2px;
	border: solid #7c7c7c;
	border-width: 1px 0;
	background: #cbcbcb;
	color: #333;

	h1 {
		flex: 1;
		margin: 0;
		padding-left: 4px;
		font-size: 11px;
	}
`

const TitleButton = styled.button`
	margin-left: 7px;
`

const Actions = styled.div`
	height: 23px;
	display: flex;
	align-items: center;
	padding-left: 3px;
	border-bottom: 1px solid #cdc9ae;
`

const Form = styled.main`
	flex: 1;
	min-height: 0;
	display: flex;
	flex-direction: column;
	padding: 7px 9px 9px;
	background: #fffcef;
`

const HeadRow = styled.div`
	display: flex;
	align-items: center;
`

const Label = styled.label`
	width: ${({ $width }) => $width}px;
	flex: none;
	padding-left: ${({ $pad = 0 }) => $pad}px;
	white-space: nowrap;
`

const Field = styled.div`
	width: ${({ $width }) => ($width ? `${$width}px` : "auto")};
	height: 17px;
	display: flex;
	flex: ${({ $grow }) => ($grow ? `${$grow} 1 0` : "none")};
	border: 1px solid #b1ac90;
	background: #fff;
	color: #1c1c1c;
`

const FieldInput = styled.input`
	flex: 1;
	min-width: 0;
	padding-left: 2px;
`

const FieldButton = styled.button`
	width: 13px;
	display: flex;
	flex: none;
	align-items: center;
	justify-content: center;
	border-left: 1px solid #c5c0a6;
	background: #ebe8d6;
	font-weight: bold;
`

const SectionTitle = styled.h2`
	margin: 0;
	height: 14px;
	border-bottom: 1px solid #c9c4a6;
	color: #94650f;
	font-size: 11px;
	line-height: 13px;
`

const Options = styled.div`
	display: flex;
	align-items: flex-start;
	padding-left: 5px;
`

const TagGroup = styled.fieldset`
	width: 183px;
	height: 67px;
	margin: 1px 264px 0 0;
	padding: 4px 2px 0;
	border: 4px double #b9b493;

	legend {
		margin-left: 4px;
		padding: 0 2px;
		color: #94650f;
		font-size: 13px;
		font-weight: bold;
	}
`

const TagButtons = styled.div`
	height: 40px;
	display: flex;
	border: 1px solid #b1ac90;
	background: #ebe7da;
`

const TagButton = styled.button`
	flex: 1;
	display: flex;
	align-items: center;
	padding-left: 1px;

	span {
		flex: 1;
	}
`

const TagArrow = styled.button`
	width: 12px;
	display: flex;
	align-items: center;
	justify-content: center;
	border-left: 1px solid #b1ac90;

	i {
		margin: 0;
	}
`

const OptionColumn = styled.div`
	flex: 1;
`

const CheckLabel = styled.label`
	height: 17px;
	display: flex;
	align-items: center;
	gap: 2px;
	${({ $off }) =>
		$off &&
		css`
			color: #a89a6c;
		`}
`

const Checkbox = styled.input`
	appearance: none;
	width: 11px;
	height: 11px;
	flex: none;
	display: flex;
	align-items: center;
	justify-content: center;
	border: 1px solid ${({ $light }) => ($light ? "#cfcdc0" : "#827e72")};
	border-radius: 1px;
	background: #fff;

	&:checked::after {
		content: "";
		width: 4px;
		height: 7px;
		margin-bottom: 2px;
		border: solid #111;
		border-width: 0 2px 2px 0;
		transform: rotate(40deg);
	}

	&:disabled {
		border-color: #d6d0b8;
		background: #fffcef;
	}
`

const DiscountRow = styled.div`
	display: flex;
	align-items: center;
	margin-top: 2px;
`

const PeriodRow = styled.div`
	display: flex;
	align-items: center;
	margin-top: 46px;
	padding-left: 394px;
`

const PeriodButton = styled.button`
	width: 18px;
	height: 17px;
	margin-left: 5px;
	border: 1px solid #c5c0a6;
	background: #ebe8d6;
`

const TableBar = styled.div`
	height: ${({ $tall }) => ($tall ? 24 : 30)}px;
	display: flex;
	flex: none;
	align-items: center;
	padding: ${({ $tall }) => ($tall ? 0 : 4)}px 0 0 10px;
`

const FilterBox = styled.div`
	flex: 0 1 251px;
	margin: 0 7px;
	border: 1px solid #aaa78c;
	background: #fff;
`

const Splitter = styled.div`
	height: 6px;
	margin: 0 7px;
	border: 1px solid #b9b69c;
	background: #f8f5e2;
`

const GoodsBox = styled(FilterBox)`
	flex: 1;
`

const Table = styled.table`
	width: 100%;
	table-layout: fixed;
	border-collapse: collapse;
	color: #1c1c1c;
`

const cell = css`
	overflow: hidden;
	border: solid #aaa78c;
	border-width: 0 0 1px 1px;
	white-space: pre;

	&:first-child {
		border-left: 0;
	}
`

const Th = styled.th`
	${cell}
	height: 19px;
	padding: 0 4px 0 3px;
	background: ${({ $current }) => ($current ? "#cfccb4" : "#f4f1dc")};
	color: #6b5a2a;
	font-weight: normal;
	text-align: left;
`

const Td = styled.td`
	${cell}
	height: 17px;
	padding: ${({ $check }) => ($check ? "0 0 0 4px" : "0 4px 0 3px")};
	background: ${({ $selected }) => ($selected ? "#4f66c0" : "#fff")};
	color: ${({ $selected }) => ($selected ? "#fff" : "inherit")};
	text-align: ${({ $right }) => ($right ? "right" : "left")};
	${({ $framed }) =>
		$framed &&
		css`
			background: #5b6cae;
		`}
`

const FormFooter = styled.div`
	height: 22px;
	display: flex;
	flex: none;
	align-items: center;
	justify-content: flex-end;
	margin-top: 5px;
	padding-right: 4px;
	border-top: 1px solid #b5b29c;
	background: #ebe7da;
`

const WindowTabs = styled.nav`
	height: 23px;
	display: flex;
	align-items: center;
	gap: 1px;
	padding-left: 2px;
`

const WindowTab = styled.button`
	width: ${({ $width }) => $width}px;
	height: 18px;
	display: flex;
	flex: none;
	align-items: center;
	gap: 2px;
	background: ${({ $active }) => ($active ? "#adc3df" : "#b1b0ae")};
	color: #33312c;
	white-space: nowrap;
`

const StatusBar = styled.footer`
	height: 18px;
	display: flex;
	align-items: center;
	gap: 4px;
	padding: 0 2px 1px 4px;
	border-top: 1px solid #cfcbbb;

	span:first-child {
		flex: 1;
	}
`

const Indicator = styled.span`
	padding: 0 2px;
	border: solid #cfcbbb;
	border-width: 0 1px;
	color: ${({ $off }) => ($off ? "#b0a67c" : "#4a3f1c")};
	font-size: 11px;
`

const Taskbar = styled.div`
	height: 27px;
	flex: none;
	overflow: hidden;
	background: #23271a;
	color: #fff;
`

const TaskbarInner = styled.div`
	height: 37px;
	display: flex;
`

const TaskButton = styled.button`
	width: 44px;
	display: flex;
	align-items: center;
	justify-content: center;
	background: ${({ $active }) => ($active ? "#53574a" : "none")};
`

const Tray = styled.div`
	display: flex;
	align-items: center;
	gap: 8px;
	margin-left: auto;
	font-size: 11px;
`

const Clock = styled.time`
	width: 54px;
	display: flex;
	flex-direction: column;
	align-items: center;
	font-size: 10px;
	line-height: 17px;
`

const Notifications = styled.button`
	margin-right: 14px;
`

const Cursor = styled.svg`
	position: absolute;
	top: 499px;
	left: 605px;
`

export default App
